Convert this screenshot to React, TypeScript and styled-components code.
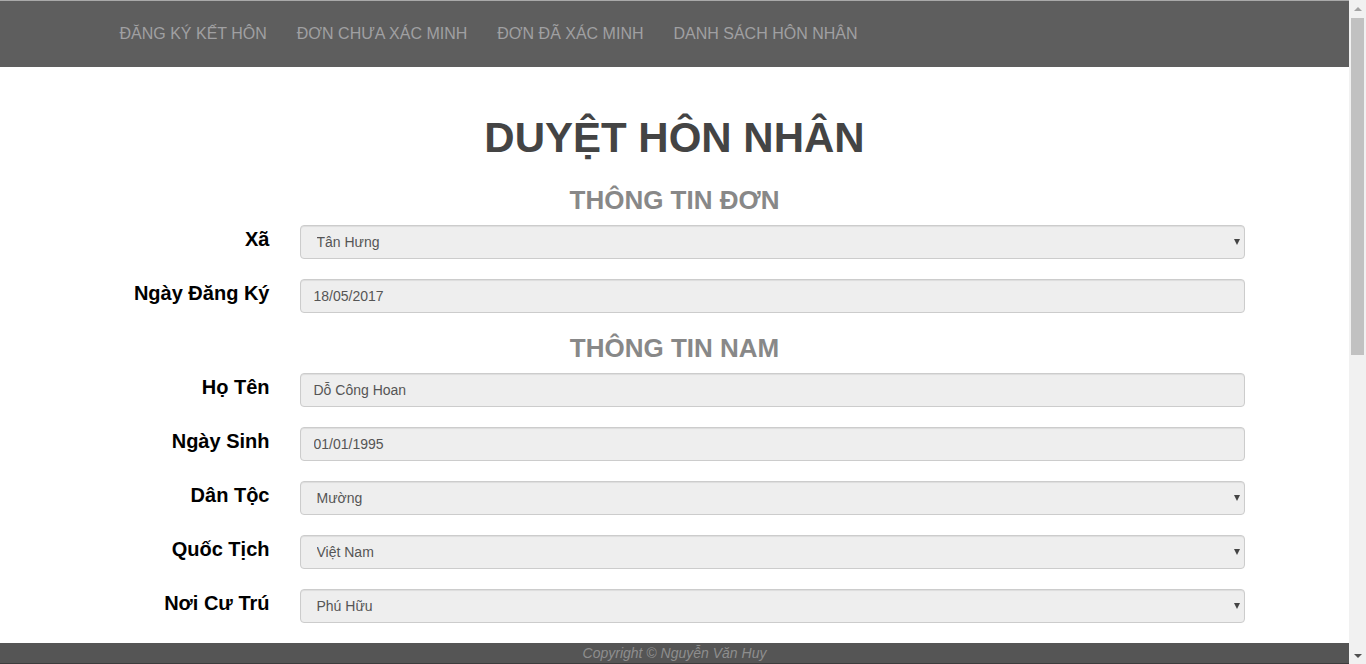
import styled, { createGlobalStyle } from 'styled-components'

const GlobalStyle = createGlobalStyle`
  html, body {
    margin: 0;
    padding: 0;
    height: 100%;
    overflow: hidden;
  }
  body {
    font-family: "Liberation Sans", Arial, sans-serif;
    font-size: 14px;
    color: #333;
    background: #fff;
  }
  #root {
    height: 100%;
  }
  * {
    box-sizing: border-box;
  }
`

const Shell = styled.div`
  display: flex;
  height: 100vh;
`

const Page = styled.div`
  flex: 1;
  min-width: 0;
  overflow: hidden;
`

/* window scrollbar, drawn since the headless browser hides the real one */
const ScrollBar = styled.div`
  width: 17px;
  flex: none;
  display: flex;
  flex-direction: column;
  background: #f1f1f1;
`

const ScrollButton = styled.div<{ $up?: boolean }>`
  height: 17px;
  display: flex;
  align-items: center;
  justify-content: center;

  &::before {
    content: '';
    width: 0;
    height: 0;
    border-left: 4px solid transparent;
    border-right: 4px solid transparent;
    ${(p) => (p.$up ? 'border-bottom: 4px solid #a3a3a3;' : 'border-top: 4px solid #505050;')}
  }
`

const ScrollTrack = styled.div`
  flex: 1;
  padding: 1px 2px 0;
`

const ScrollThumb = styled.div`
  height: 337px;
  background: #c1c1c1;
`

const NavBar = styled.nav`
  background: #5e5e5e;
  border-top: 1px solid #a9a9a9;
  height: 67px;
`

const Container = styled.div`
  width: 1170px;
  margin: 0 auto;
  padding: 0 15px;
`

const NavList = styled.ul`
  display: flex;
  list-style: none;
  margin: 0;
  padding: 0;
`

const NavLink = styled.a`
  display: block;
  padding: 23px 15px 0;
  height: 66px;
  color: #a0a0a2;
  font-size: 16px;
  line-height: 20px;
  text-decoration: none;
`

const Main = styled.main`
  padding: 47px 0 300px;
`

const Title = styled.h1`
  margin: 0 0 23px;
  text-align: center;
  font-size: 42px;
  line-height: 48px;
  font-weight: bold;
  color: #444;
`

const SectionTitle = styled.h2`
  margin: 0 0 10px;
  text-align: center;
  font-size: 26px;
  line-height: 30px;
  font-weight: bold;
  color: #888;
`

const Form = styled.form`
  margin: 0 -15px;
`

const Row = styled.div`
  display: grid;
  grid-template-columns: 195px 975px;
  margin-bottom: 20px;
`

const Label = styled.label`
  padding: 2px 15px 0;
  text-align: right;
  font-size: 20px;
  line-height: 24px;
  font-weight: bold;
  color: #000;
`

const Field = styled.div`
  position: relative;
  padding: 0 15px;
`

const Input = styled.input`
  display: block;
  width: 100%;
  height: 34px;
  padding: 6px 13px;
  font-family: "Liberation Sans", Arial, sans-serif;
  font-size: 14px;
  color: #555;
  background: #eee;
  border: 1px solid #ccc;
  border-radius: 4px;
  box-shadow: inset 0 1px 1px rgba(0, 0, 0, 0.075);
  outline: none;
`

const Select = styled.select`
  display: block;
  width: 100%;
  height: 34px;
  padding: 6px 16px;
  font-family: "Liberation Sans", Arial, sans-serif;
  font-size: 14px;
  color: #555;
  background: #eee;
  border: 1px solid #ccc;
  border-radius: 4px;
  box-shadow: inset 0 1px 1px rgba(0, 0, 0, 0.075);
  appearance: none;
  outline: none;
  opacity: 1;
`

const Caret = styled.span`
  position: absolute;
  right: 20px;
  top: 14px;
  width: 0;
  height: 0;
  border-left: 3.5px solid transparent;
  border-right: 3.5px solid transparent;
  border-top: 6px solid #444;
  pointer-events: none;
`

const Footer = styled.footer`
  position: fixed;
  left: 0;
  right: 17px;
  bottom: 0;
  height: 21px;
  background: #555;
  border-bottom: 1px solid #3d3d3d;
  text-align: center;
  font-size: 14px;
  line-height: 20px;
  font-style: italic;
  color: #8e8e8e;
`

type FieldDef = { label: string; value: string; select?: boolean }

const donFields: FieldDef[] = [
  { label: 'Xã', value: 'Tân Hưng', select: true },
  { label: 'Ngày Đăng Ký', value: '18/05/2017' },
]

const namFields: FieldDef[] = [
  { label: 'Họ Tên', value: 'Dỗ Công Hoan' },
  { label: 'Ngày Sinh', value: '01/01/1995' },
  { label: 'Dân Tộc', value: 'Mường', select: true },
  { label: 'Quốc Tịch', value: 'Việt Nam', select: true },
  { label: 'Nơi Cư Trú', value: 'Phú Hữu', select: true },
]

const nuFields: FieldDef[] = [
  { label: 'Họ Tên', value: 'Nguyễn Thị Lan' },
  { label: 'Ngày Sinh', value: '12/03/1997' },
  { label: 'Dân Tộc', value: 'Kinh', select: true },
  { label: 'Quốc Tịch', value: 'Việt Nam', select: true },
  { label: 'Nơi Cư Trú', value: 'Tân Hưng', select: true },
]

function FormRow({ label, value, select }: FieldDef) {
  return (
    <Row>
      <Label>{label}</Label>
      <Field>
        {select ? (
          <>
            <Select disabled value={value} onChange={() => {}}>
              <option value={value}>{value}</option>
            </Select>
            <Caret />
          </>
        ) : (
          <Input disabled value={value} readOnly />
        )}
      </Field>
    </Row>
  )
}

export default function App() {
  const links = ['ĐĂNG KÝ KẾT HÔN', 'ĐƠN CHƯA XÁC MINH', 'ĐƠN ĐÃ XÁC MINH', 'DANH SÁCH HÔN NHÂN']
  return (
    <Shell>
      <GlobalStyle />
      <Page>
        <NavBar>
          <Container>
            <NavList>
              {links.map((l) => (
                <li key={l}>
                  <NavLink href="#">{l}</NavLink>
                </li>
              ))}
            </NavList>
          </Container>
        </NavBar>
        <Main>
          <Container>
            <Title>DUYỆT HÔN NHÂN</Title>
            <Form>
              <SectionTitle>THÔNG TIN ĐƠN</SectionTitle>
              {donFields.map((f) => (
                <FormRow key={f.label} {...f} />
              ))}
              <SectionTitle>THÔNG TIN NAM</SectionTitle>
              {namFields.map((f) => (
                <FormRow key={f.label} {...f} />
              ))}
              <SectionTitle>THÔNG TIN NỮ</SectionTitle>
              {nuFields.map((f) => (
                <FormRow key={'nu' + f.label} {...f} />
              ))}
            </Form>
          </Container>
        </Main>
        <Footer>Copyright © Nguyễn Văn Huy</Footer>
      </Page>
      <ScrollBar>
        <ScrollButton $up />
        <ScrollTrack>
          <ScrollThumb />
        </ScrollTrack>
        <ScrollButton />
      </ScrollBar>
    </Shell>
  )
}
